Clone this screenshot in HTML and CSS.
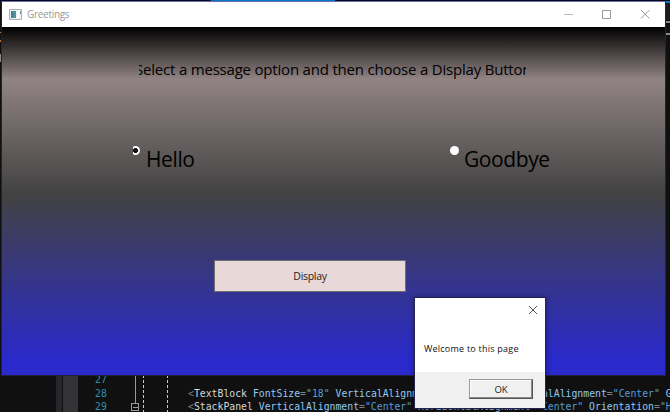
FILE: index.html
```html
<!DOCTYPE html>
<html lang="en">
<head>
<meta charset="utf-8">
<title>Greetings</title>
<link rel="stylesheet" href="styles.css">
</head>
<body>
<main class="desktop">
  <section class="editor">
    <svg class="gutter" width="670" height="412" shape-rendering="crispEdges">
      <path fill="#0078c8" d="M211 0h124v1H211zM665 1h5v2h-5z"/>
      <path fill="#26262c" d="M56 375h6v37h-6z"/>
      <path fill="#333336" d="M63 375h15v37H63z"/>
      <path fill="#1c1c21" d="M665 3h5v17h-5z"/>
      <path fill="#888" d="M665 21h5v2h-5zM665 33h5v2h-5zM0 54h2v8H0z"/>
      <path fill="#b66f39" d="M0 32h1v1H0zM0 40h1v2H0z"/>
      <path stroke="#999" d="M135.500 375v28M131.500 403.500h7v7h-7zM133 407.500h5" fill="none"/>
      <path stroke="#ccc" stroke-dasharray="3 2" d="M143.500 375v37M167.500 375v37"/>
    </svg>
    <div class="code">
      <div class="line"><span class="num">27</span></div>
      <div class="line"><span class="num">28</span><span class="src"><i>&lt;</i><b>TextBlock</b> FontSize<i>=</i><u>"18"</u> VerticalAlignment<i>=</i><u>"Center"</u> HorizontalAlignment<i>=</i><u>"Center"</u> G</span></div>
      <div class="line"><span class="num">29</span><span class="src"><i>&lt;</i><b>StackPanel</b> VerticalAlignment<i>=</i><u>"Center"</u> HorizontalAlignment<i>=</i><u>"Center"</u> Orientation<i>=</i><u>"H</u></span></div>
    </div>
  </section>

  <section class="window">
    <header class="titlebar">
      <svg class="app-icon" width="14" height="12" viewBox="0 0 14 12">
        <path fill="#edf1f2" stroke="#a9b1b6" d="M.5.500h12v10H.5z"/>
        <path fill="#4f9690" d="M2 2h5v7H2z"/><path fill="#4c769f" d="M2 2h2v7H2z"/>
        <path fill="#fff" d="M8 2h2v7H8z"/><path fill="#699dac" d="M11 2h1v3h-1z"/>
      </svg>
      <span class="title">Greetings</span>
      <svg class="controls" width="86" height="11" fill="none" stroke="#999">
        <path stroke="#bbb" d="M0 5.500h9"/>
        <path d="M38.500 1.500h8v8h-8z"/>
        <path d="M77 1l8.500 8.500M85.500 1L77 9.500"/>
      </svg>
    </header>
    <div class="content">
      <div class="prompt"><span>Select a message option and then choose a Display Button</span></div>
      <div class="options">
        <label class="option"><span class="clip"><span class="radio checked"></span></span><span class="label hello">Hello</span></label>
        <label class="option"><span class="radio"></span><span class="label goodbye">Goodbye</span></label>
      </div>
      <button class="display"><span>Display</span></button>
    </div>
  </section>

  <section class="dialog">
    <svg class="close" width="10" height="10" stroke="#555"><path d="M1 1l8 8M9 1L1 9"/></svg>
    <p>Welcome to this page</p>
    <footer><button class="ok">OK</button></footer>
  </section>
</main>
</body>
</html>
```
FILE: styles.css
```css
* { box-sizing: border-box; }
body { margin: 0; background: #101010; font-family: "Open Sans", "Noto Sans", sans-serif; }
.desktop { position: relative; width: 670px; height: 412px; overflow: hidden; }
.editor { height: 412px; padding-top: 372px; border-top: 1px solid #080820; }
.gutter { position: absolute; left: 0; top: 0; }
.code { position: relative; width: 670px; font: 9.8px/13.5px "DejaVu Sans Mono", monospace; color: #92caf4; }
.line { display: flex; height: 13.500px; }
.num { flex: none; width: 93px; margin-left: 95px; color: #2b91af; }
.src { white-space: pre; }
.code i { font-style: normal; color: #808080; }
.code b { font-weight: normal; color: #d6d6d6; }
.code u { text-decoration: none; color: #569cd6; }

.window { position: absolute; left: 1px; top: 1px; width: 665px; height: 375px; border: 1px solid #222338; border-top-color: #6c6cae; }
.titlebar { display: flex; align-items: center; height: 25px; padding-left: 7px; background: #fff; }
.title { margin: -2px 0 0 4px; flex: 1; font-size: 10px; letter-spacing: -.3px; color: #999; }
.controls { margin: -1px 15px 0 0; }
.content { height: 348px; display: flex; flex-direction: column; background: linear-gradient(#000 0, #918383 15%, #424242 48%, #2929cc 96%); }
.prompt { width: 387px; height: 24px; margin: 31px 0 0 137px; overflow: hidden; white-space: nowrap; font-size: 15px; line-height: 23px; }
.prompt span { margin-left: -4px; letter-spacing: -.2px; }
.options { display: flex; height: 40px; margin: 58px 0 0 131px; }
.option { display: flex; width: 317px; padding-top: 6px; }
.option:last-child { width: 130px; }
.clip { width: 7px; height: 10px; overflow: hidden; display: flex; justify-content: flex-end; }
.radio { flex: none; width: 9px; height: 9px; border-radius: 50%; background: #fff; }
.checked { background: radial-gradient(circle, #111 0 2.200px, #fff 2.800px); }
.label { margin: -1px 0 0 6px; font-size: 21px; line-height: 28px; letter-spacing: -.4px; }
.goodbye { margin-left: 5px; }
.display { width: 192px; height: 32px; margin: 80px 0 0 212px; border: 1px solid #707070; padding: 0; background: #e8d8d8; font: 10.500px "Open Sans", sans-serif; letter-spacing: -.3px; color: #222; }

.dialog { position: absolute; left: 414px; top: 297px; width: 132px; height: 112px; border: 1px solid #24244f; background: #fff; box-shadow: 0 0 5px #0006; display: flex; flex-direction: column; }
.close { margin: 7px 7px 0 auto; flex: none; }
.dialog p { margin: 26px 0 0 9px; font-size: 9px; line-height: 15px; letter-spacing: .23px; white-space: nowrap; color: #111; }
.dialog footer { margin-top: auto; height: 36px; padding: 7px 12px; background: #f0f0f0; display: flex; justify-content: flex-end; }
.ok { width: 64px; height: 20px; padding: 0; border: 1px solid; border-color: #999 #555 #555 #999; box-shadow: inset -1px -1px #888, inset 1px 1px #fff; background: #f0f0f0; font: 9.500px "Open Sans", sans-serif; color: #222; }
```
